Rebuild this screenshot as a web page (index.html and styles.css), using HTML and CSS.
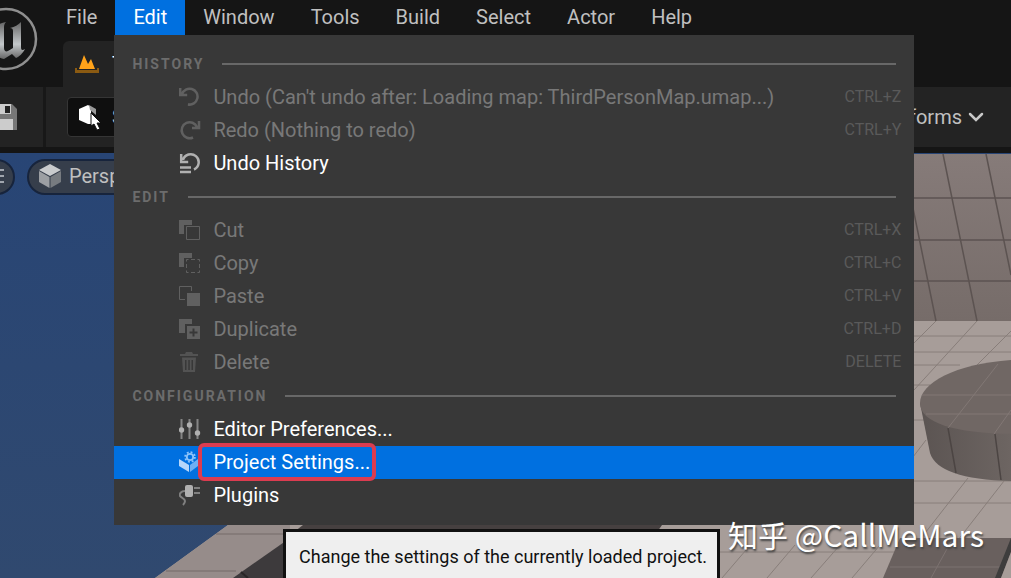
FILE: index.html
```
<!DOCTYPE html>
<html lang="en">
<head>
    <meta charset="UTF-8">
    <meta name="viewport" content="width=device-width, initial-scale=1.0">
    <title>Unreal Editor</title>
    <link rel="stylesheet" href="styles.css">
</head>
<body>
    <header class="titlebar">
        <div class="logo">
            <svg viewBox="0 0 64 64" width="64" height="64">
                <defs>
                    <linearGradient id="metal" x1="0" y1="0" x2="0" y2="1">
                        <stop offset="0" stop-color="#666"/>
                        <stop offset="0.6" stop-color="#c4c8ca"/>
                        <stop offset="1" stop-color="#666"/>
                    </linearGradient>
                </defs>
                <circle cx="32" cy="32" r="30" fill="#161616" stroke="#8f8f8f" stroke-width="2.5"/>
                <path fill="url(#metal)" d="M10 32c3-9 9-14 22-17-2 2-2 4-2 6v20c0 3 2 4 4 3l5-3V24c0-2-1-3-3-3 5-1 8-3 11-6v25c0 3 1 4 4 2-2 4-6 8-9 9l-4-4-8 5c-6-1-9-4-9-9V25c-4 1-8 4-11 7z"/>
            </svg>
        </div>
        <div class="titlebar-main">
            <nav class="menubar">
                <button class="menubar-item">File</button>
                <div class="menubar-group">
                    <button class="menubar-item active">Edit</button>

                    <div class="menu">
                        <h2 class="menu-heading">HISTORY</h2>
                        <button class="menu-item disabled">
                            <svg viewBox="0 0 22 22"><path d="M1.200 2v7h7M3 8A8 8 0 1 1 9 18.500h3" class="stroke"/></svg>
                            <span>Undo (Can't undo after: Loading map: ThirdPersonMap.umap...)</span>
                            <kbd>CTRL+Z</kbd>
                        </button>
                        <button class="menu-item disabled">
                            <svg viewBox="0 0 22 22"><path d="M20 2v7h-7M18 8A8 8 0 1 0 14 18.500" class="stroke"/></svg>
                            <span>Redo (Nothing to redo)</span>
                            <kbd>CTRL+Y</kbd>
                        </button>
                        <button class="menu-item">
                            <svg viewBox="0 0 22 22"><path d="M2.200 2v8h7M4 8A8 8 0 1 1 15 17.500M1 15.500h11M1 20h11" class="stroke"/></svg>
                            <span>Undo History</span>
                        </button>

                        <h2 class="menu-heading">EDIT</h2>
                        <button class="menu-item disabled">
                            <svg viewBox="0 0 22 22"><path d="M0 1h13v5H5v9H0z"/><path d="M7.500 7.500h13v13h-13z" class="thin"/></svg>
                            <span>Cut</span>
                            <kbd>CTRL+X</kbd>
                        </button>
                        <button class="menu-item disabled">
                            <svg viewBox="0 0 22 22"><path d="M0 1h13v5H5v9H0z"/><path d="M7.500 7.500h13v13h-13z" class="thin" stroke-dasharray="4 2.500" stroke-dashoffset="2"/></svg>
                            <span>Copy</span>
                            <kbd>CTRL+C</kbd>
                        </button>
                        <button class="menu-item disabled">
                            <svg viewBox="0 0 22 22"><path d="M6 14.500H.5v-13h12V6" class="thin"/><path d="M8 8h13v13H8z"/></svg>
                            <span>Paste</span>
                            <kbd>CTRL+V</kbd>
                        </button>
                        <button class="menu-item disabled">
                            <svg viewBox="0 0 22 22"><path d="M0 1h13v5H6v9H0z"/><path fill-rule="evenodd" d="M8 8h13v13H8zM13.500 10.500v3h-3v2h3v3h2v-3h3v-2h-3v-3z"/></svg>
                            <span>Duplicate</span>
                            <kbd>CTRL+D</kbd>
                        </button>
                        <button class="menu-item disabled dim">
                            <svg viewBox="0 0 22 22"><path fill-rule="evenodd" d="M1 3h5l1-2h6l1 2h5v2H1zM3 6.500h14l-1 14.500H4zM6 9v10h1.500V9zM9.300 9v10h1.500V9zM12.500 9v10H14V9z"/></svg>
                            <span>Delete</span>
                            <kbd>DELETE</kbd>
                        </button>

                        <h2 class="menu-heading">CONFIGURATION</h2>
                        <button class="menu-item">
                            <svg viewBox="0 0 22 22"><path d="M2.500 1v20M10.500 1v20M18.500 1v20" stroke="#858585" stroke-width="2"/><circle cx="2.500" cy="12" r="2.700"/><circle cx="10.500" cy="7" r="2.700"/><circle cx="18.500" cy="15" r="2.700"/></svg>
                            <span>Editor Preferences...</span>
                        </button>
                        <button class="menu-item selected">
                            <svg viewBox="0 0 22 22"><path d="M0 8l10 6v7L0 15z" fill="#b5d6fa"/><path d="M11 14l8-6v7l-8 6z" fill="#6eb0f5"/><circle cx="11" cy="6" r="5.500" fill="#0070e0"/><circle cx="11" cy="6" r="3.200" fill="none" stroke="#8cc3fa" stroke-width="1.800"/><circle cx="11" cy="6" r="4.900" fill="none" stroke="#8cc3fa" stroke-width="1.800" stroke-dasharray="1.900 1.950"/></svg>
                            <span class="marked">Project Settings...</span>
                        </button>
                        <button class="menu-item">
                            <svg viewBox="0 0 22 22"><path d="M6 7C2 7 0 10 1 12s5 2 5 5c0 2-1 3-2 4" fill="none" stroke="#808080" stroke-width="2"/><rect x="6" y="1" width="8" height="12" rx="2"/><path d="M15 3h6v2h-6zM15 8h6v2h-6z" fill="#808080"/></svg>
                            <span>Plugins</span>
                        </button>
                    </div>
                </div>
                <button class="menubar-item">Window</button>
                <button class="menubar-item">Tools</button>
                <button class="menubar-item">Build</button>
                <button class="menubar-item">Select</button>
                <button class="menubar-item">Actor</button>
                <button class="menubar-item">Help</button>
            </nav>
            <div class="tab">
                <svg viewBox="0 0 24 20" width="24" height="20">
                    <path d="M0 14v5h24v-5h-2v2H2v-2z" fill="#8a5a12"/>
                    <path d="M4 15L9 1l4 9 3-5 4 10z" fill="#ffa31a"/>
                </svg>
                <span>ThirdPersonMap</span>
            </div>
        </div>
    </header>

    <div class="toolbar">
        <button class="save" aria-label="Save">
            <svg viewBox="0 0 26 26" width="26" height="26">
                <path d="M0 0h21l5 5v21H0z" fill="#777"/>
                <path d="M3 0h17v10H3zM3 15h19v11H3z" fill="#ccc"/>
                <path d="M14 2h5v7h-5z" fill="#222"/>
            </svg>
        </button>
        <div class="separator"></div>
        <button class="mode">
            <svg viewBox="0 0 24 26" width="24" height="26">
                <path d="M1 5l9-4v19l-9-4z" fill="#fff"/>
                <path d="M10 1l3 2v17h-3z" fill="#fff"/>
                <path d="M11 1l7 4v6l-6-5z" fill="#999"/>
                <path d="M13 9v13l3-2 3 6 3-1-3-6h4z" fill="#fff" stroke="#0f0f0f"/>
            </svg>
            <span>Selection Mode</span>
        </button>
        <button class="platforms">
            <span>Platforms</span>
            <svg viewBox="0 0 16 10" width="16" height="10"><path d="M2 2l6 6 6-6" fill="none" stroke="#c8c8c8" stroke-width="2.500" stroke-linecap="round"/></svg>
        </button>
    </div>

    <main class="viewport">
        <svg class="scene" viewBox="0 153 1011 425" preserveAspectRatio="xMaxYMin slice">
            <defs>
                <linearGradient id="sky" x1="0" y1="0" x2="0" y2="1">
                    <stop offset="0" stop-color="#284575"/>
                    <stop offset="1" stop-color="#30496f"/>
                </linearGradient>
                <linearGradient id="wall" x1="0" y1="0" x2="0" y2="1">
                    <stop offset="0" stop-color="#867b79"/>
                    <stop offset="1" stop-color="#766c69"/>
                </linearGradient>
                <linearGradient id="side" x1="0" y1="0" x2="1" y2="0">
                    <stop offset="0" stop-color="#5b5452"/>
                    <stop offset="1" stop-color="#6d6562"/>
                </linearGradient>
            </defs>
            <rect y="153" width="1011" height="425" fill="url(#sky)"/>

            <!-- back wall -->
            <rect x="600" y="154" width="411" height="167" fill="url(#wall)"/>
            <path d="M900 198h111M900 240h111M900 281h111M943 154l34 167M986 154l25 121M902 154l34 167" stroke="#5c5351" stroke-width="1.500" fill="none"/>

            <!-- floor -->
            <path d="M228 525L155 578H1011V321H600V525z" fill="#a79d99"/>
            <path d="M228 525L155 578H290V525z" fill="#968c8a"/>
            <path d="M216 534h70M166 571h70" stroke="#746b68" fill="none"/>
            <path d="M900 336h111M900 352h111M900 365h60M900 385h30M900 420h30M900 481h111M900 503h111M716 552h190M936 321l-36 36M977 321l-63 69M1011 331l-40 40M926 440l-26 34M968 478L890 578M1004 481l-60 77M746 550l-24 28M795 545l-28 33M840 545l-29 33M880 545l-28 33" stroke="#887e7a" fill="none"/>

            <!-- round platform -->
            <path d="M920 403L930 453Q938 479 1011 481V362z" fill="url(#side)"/>
            <path d="M1011 360C955 364 920 383 920 403S955 433 1011 434z" fill="#706764"/>
            <path d="M922 395h89M926 414h85M948 428l50-64M994 434l17-24" stroke="#827875" fill="none"/>
            <path d="M948 428l8 45M995 434l6 46" stroke="#4c4543" stroke-width="1.500" fill="none"/>

            <!-- ramps -->
            <path d="M900 538h111v40H883z" fill="#69605e"/>
            <path d="M890 567h112M953 538l-22 40" stroke="#7c7270" fill="none"/>
            <path d="M1011 538v14l-10 26h-6z" fill="#3e3d3d"/>
            <path d="M1011 552v26h-10z" fill="#a79d99"/>
            <path d="M303 525H662L655 535H290z" fill="#464040"/>
            <path d="M290 538L233 578H300z" fill="#3d3a3c"/>
            <path d="M241 572l7 6" stroke="#292627" stroke-width="2"/>
        </svg>

        <div class="viewport-controls">
            <button class="pill" aria-label="Viewport options">
                <svg viewBox="0 0 18 16" width="18" height="16"><path d="M0 2h18M0 8h18M0 14h18" stroke="#c5c9cf" stroke-width="1.500"/></svg>
            </button>
            <button class="pill">
                <svg viewBox="0 0 24 26" width="24" height="26">
                    <path d="M12 1l11 6-11 6L1 7z" fill="#c9cbcd"/>
                    <path d="M1 8l10.500 6v11L1 19z" fill="#9c9fa3"/>
                    <path d="M23 8l-10.500 6v11L23 19z" fill="#777b80"/>
                </svg>
                <span>Perspective</span>
            </button>
        </div>

        <div class="tooltip" role="tooltip">Change the settings of the currently loaded project.</div>
        <div class="watermark">知乎 @CallMeMars</div>
    </main>
</body>
</html>
```
FILE: styles.css
```
* {
    box-sizing: border-box;
}

body {
    margin: 0;
    height: 100vh;
    display: flex;
    flex-direction: column;
    overflow: hidden;
    background: #151515;
    color: #c0c0c0;
    font-family: Roboto, "Liberation Sans", sans-serif;
    font-size: 20px;
    line-height: 24px;
}

button {
    margin: 0;
    padding: 0;
    border: none;
    background: none;
    color: inherit;
    font: inherit;
    white-space: nowrap;
}

svg {
    flex: none;
}

/* title bar */
.titlebar {
    display: flex;
}

.logo {
    width: 48px;
    padding-top: 7px;
    display: flex;
    justify-content: flex-end;
}

.logo svg {
    margin-right: 10px;
}

.titlebar-main {
    flex: 1;
}

.menubar {
    display: flex;
    height: 35px;
}

.menubar-group {
    position: relative;
}

.menubar-item {
    height: 35px;
    padding: 0 18px 2px;
}

.menubar-item.active {
    background: #0070e0;
    color: #fff;
}

.tab {
    display: flex;
    align-items: center;
    gap: 13px;
    width: 260px;
    height: 46px;
    margin: 6px 0 0 15px;
    padding-left: 12px;
    border-radius: 6px 6px 0 0;
    background: #232323;
    color: #fff;
}

/* edit menu */
.menu {
    position: absolute;
    top: 100%;
    left: -1px;
    z-index: 10;
    min-width: 800px;
    padding: 12px 0 13px;
    background: #383838;
}

.menu-heading {
    display: flex;
    align-items: center;
    gap: 18px;
    height: 34px;
    margin: 0;
    padding: 0 18px;
    color: #6c6c6c;
    font-size: 14px;
    font-weight: 700;
    letter-spacing: 2px;
}

.menu-heading::after {
    content: "";
    flex: 1;
    height: 2px;
    background: #686868;
}

.menu-item {
    display: flex;
    align-items: center;
    gap: 12px;
    width: 100%;
    height: 33px;
    padding: 0 13px 2px 65px;
    color: #fff;
    text-align: left;
}

.menu-item svg {
    width: 22px;
    height: 22px;
    fill: #b0b0b0;
    stroke: none;
    color: #b0b0b0;
}

.menu-item .stroke {
    fill: none;
    stroke: currentColor;
    stroke-width: 2.5;
}

.menu-item .thin {
    fill: none;
    stroke: currentColor;
}

.menu-item kbd {
    margin-left: auto;
    color: #5a5a5a;
    font-family: inherit;
    font-size: 16px;
}

.menu-item.disabled {
    color: #787878;
}

.menu-item.disabled svg {
    fill: #606060;
    color: #606060;
}

.menu-item.dim svg {
    fill: #535353;
}

.menu-item.selected {
    background: #0070e0;
}

.marked {
    position: relative;
}

.marked::after {
    content: "";
    position: absolute;
    inset: -7px -6px -7px -15px;
    border: 4px solid #dc3c50;
    border-radius: 6px;
}

/* toolbar */
.toolbar {
    display: flex;
    align-items: center;
    height: 66px;
    border-bottom: 6px solid #151515;
    background: #232323;
}

.save {
    display: flex;
    margin-left: -9px;
}

.separator {
    align-self: stretch;
    width: 3px;
    margin: 0 21px 0 26px;
    background: #181818;
}

.mode {
    display: flex;
    align-items: center;
    gap: 10px;
    height: 40px;
    padding: 0 10px;
    border: 1px solid #353535;
    border-radius: 4px;
    background: #0f0f0f;
}

.platforms {
    display: flex;
    align-items: center;
    gap: 6px;
    margin-left: auto;
    margin-right: 27px;
}

/* level viewport */
.viewport {
    position: relative;
    flex: 1;
    min-height: 0;
    overflow: hidden;
}

.scene {
    position: absolute;
    width: 100%;
    height: 100%;
}

.viewport-controls {
    position: relative;
    display: flex;
    gap: 12px;
    padding-top: 6px;
    margin-left: -25px;
}

.pill {
    display: flex;
    align-items: center;
    gap: 7px;
    height: 36px;
    padding: 0 9px 2px;
    border: 2px solid #17243c;
    border-radius: 18px;
    background: #363e4b;
}

.tooltip {
    position: absolute;
    bottom: -12px;
    left: 28%;
    padding: 13px 10px 18px 13px;
    border: 3px solid #111;
    background: #efefef;
    color: #111;
    font-size: 18px;
    white-space: nowrap;
}

.watermark {
    position: absolute;
    right: 27px;
    bottom: 24px;
    z-index: 20;
    color: #fff;
    font-family: "Noto Sans CJK SC", sans-serif;
    font-size: 30px;
    line-height: 40px;
    text-shadow: 1px 2px 2px #444;
}
```
